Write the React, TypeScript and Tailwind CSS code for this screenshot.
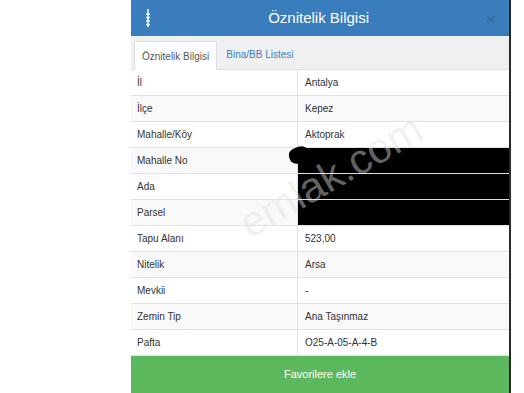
import React from 'react'

const rows: { label: string; value: string; hidden?: boolean }[] = [
  { label: 'İl', value: 'Antalya' },
  { label: 'İlçe', value: 'Kepez' },
  { label: 'Mahalle/Köy', value: 'Aktoprak' },
  { label: 'Mahalle No', value: '', hidden: true },
  { label: 'Ada', value: '', hidden: true },
  { label: 'Parsel', value: '', hidden: true },
  { label: 'Tapu Alanı', value: '523,00' },
  { label: 'Nitelik', value: 'Arsa' },
  { label: 'Mevkii', value: '-' },
  { label: 'Zemin Tip', value: 'Ana Taşınmaz' },
  { label: 'Pafta', value: 'O25-A-05-A-4-B' },
]

function GripIcon() {
  return (
    <svg width="6" height="20" viewBox="0 0 6 20" className="text-white/90">
      <line x1="3" y1="1" x2="3" y2="19" stroke="currentColor" strokeWidth="1.6" />
      <line x1="1" y1="6" x2="5" y2="6" stroke="currentColor" strokeWidth="1.4" />
      <line x1="1" y1="9.5" x2="5" y2="9.5" stroke="currentColor" strokeWidth="1.4" />
      <line x1="1" y1="13" x2="5" y2="13" stroke="currentColor" strokeWidth="1.4" />
      <line x1="1" y1="16.5" x2="5" y2="16.5" stroke="currentColor" strokeWidth="1.4" />
    </svg>
  )
}

export default function App() {
  return (
    <div className="flex h-[393px] w-[524px] overflow-hidden bg-white font-['Liberation_Sans',Arial,sans-serif]">
      <div className="w-[131px] shrink-0" />
      <div className="relative flex w-[380px] shrink-0 flex-col border-r-2 border-[#2a2a2a]">
        {/* header */}
        <div className="flex h-[36px] items-center bg-[#3a7dbd] px-[14px]">
          <GripIcon />
          <div className="flex-1 text-center text-[15px] text-white">Öznitelik Bilgisi</div>
          <span className="text-[15px] font-bold leading-none text-[#3d6a96]">×</span>
        </div>

        {/* tabs */}
        <div className="flex h-[34px] items-end border-b border-[#ddd] bg-[#f0f0f0] pl-[3px]">
          <div className="-mb-px flex h-[29px] items-center border border-b-0 border-[#e0e0e0] bg-white px-[7px] text-[10px] text-[#555]">
            Öznitelik Bilgisi
          </div>
          <div className="flex h-[29px] items-center px-[9px] text-[10px] text-[#3a7dbd]">Bina/BB Listesi</div>
        </div>

        {/* table */}
        <div className="flex flex-col">
          {rows.map((r, i) => (
            <div
              key={r.label}
              className={`flex h-[26px] border-b border-[#e2e2e2] text-[10px] text-[#333] ${i % 2 === 1 ? 'bg-[#f9f9f9]' : 'bg-white'}`}
            >
              <div className="flex w-[167px] items-center border-r border-[#e2e2e2] pl-[6px]">{r.label}</div>
              <div className={`flex flex-1 items-center pl-[7px] ${r.hidden ? 'bg-black' : ''}`}>{r.value}</div>
            </div>
          ))}
        </div>

        {/* button */}
        <div className="flex flex-1 items-center justify-center bg-[#5cb85c] text-[11px] text-white">Favorilere ekle</div>

        {/* redaction blob */}
        <div className="pointer-events-none absolute left-[158px] top-[147px] h-[16px] w-[20px] rotate-[-20deg] rounded-[40%] bg-black" />

        {/* watermark */}
        <div className="pointer-events-none absolute left-[112px] top-[206px] origin-left rotate-[-30deg] text-[42px] leading-none text-[rgba(225,225,225,0.45)]">
          emlak.com
        </div>
      </div>
    </div>
  )
}
